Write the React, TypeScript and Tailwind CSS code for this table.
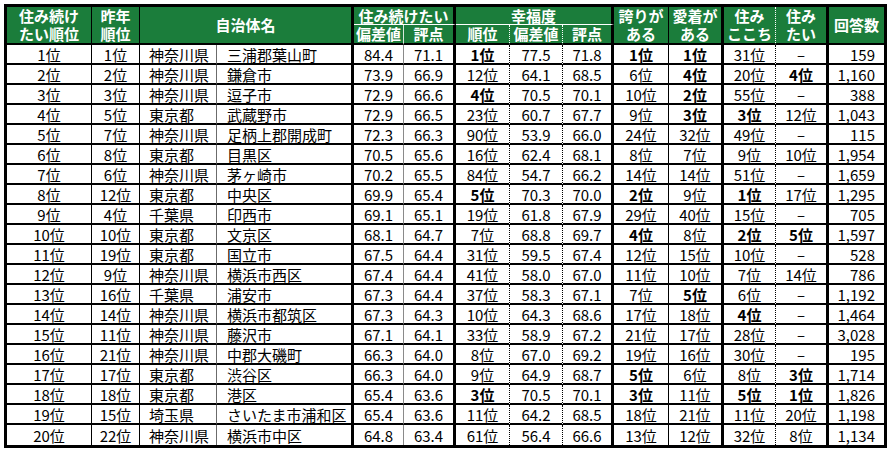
import React from "react";

type Row = string[];

const D = "–";

const rows: Row[] = [
  ["1位", "1位", "神奈川県", "三浦郡葉山町", "84.4", "71.1", "*1位", "77.5", "71.8", "*1位", "*1位", "31位", D, "159"],
  ["2位", "2位", "神奈川県", "鎌倉市", "73.9", "66.9", "12位", "64.1", "68.5", "6位", "*4位", "20位", "*4位", "1,160"],
  ["3位", "3位", "神奈川県", "逗子市", "72.9", "66.6", "*4位", "70.5", "70.1", "10位", "*2位", "55位", D, "388"],
  ["4位", "5位", "東京都", "武蔵野市", "72.9", "66.5", "23位", "60.7", "67.7", "9位", "*3位", "*3位", "12位", "1,043"],
  ["5位", "7位", "神奈川県", "足柄上郡開成町", "72.3", "66.3", "90位", "53.9", "66.0", "24位", "32位", "49位", D, "115"],
  ["6位", "8位", "東京都", "目黒区", "70.5", "65.6", "16位", "62.4", "68.1", "8位", "7位", "9位", "10位", "1,954"],
  ["7位", "6位", "神奈川県", "茅ヶ崎市", "70.2", "65.5", "84位", "54.7", "66.2", "14位", "14位", "51位", D, "1,659"],
  ["8位", "12位", "東京都", "中央区", "69.9", "65.4", "*5位", "70.3", "70.0", "*2位", "9位", "*1位", "17位", "1,295"],
  ["9位", "4位", "千葉県", "印西市", "69.1", "65.1", "19位", "61.8", "67.9", "29位", "40位", "15位", D, "705"],
  ["10位", "10位", "東京都", "文京区", "68.1", "64.7", "7位", "68.8", "69.7", "*4位", "8位", "*2位", "*5位", "1,597"],
  ["11位", "19位", "東京都", "国立市", "67.5", "64.4", "31位", "59.5", "67.4", "12位", "15位", "10位", D, "528"],
  ["12位", "9位", "神奈川県", "横浜市西区", "67.4", "64.4", "41位", "58.0", "67.0", "11位", "10位", "7位", "14位", "786"],
  ["13位", "16位", "千葉県", "浦安市", "67.3", "64.4", "37位", "58.3", "67.1", "7位", "*5位", "6位", D, "1,192"],
  ["14位", "14位", "神奈川県", "横浜市都筑区", "67.3", "64.3", "10位", "64.3", "68.6", "17位", "18位", "*4位", D, "1,464"],
  ["15位", "11位", "神奈川県", "藤沢市", "67.1", "64.1", "33位", "58.9", "67.2", "21位", "17位", "28位", D, "3,028"],
  ["16位", "21位", "神奈川県", "中郡大磯町", "66.3", "64.0", "8位", "67.0", "69.2", "19位", "16位", "30位", D, "195"],
  ["17位", "17位", "東京都", "渋谷区", "66.3", "64.0", "9位", "64.9", "68.7", "*5位", "6位", "8位", "*3位", "1,714"],
  ["18位", "18位", "東京都", "港区", "65.4", "63.6", "*3位", "70.5", "70.1", "*3位", "11位", "*5位", "*1位", "1,826"],
  ["19位", "15位", "埼玉県", "さいたま市浦和区", "65.4", "63.6", "11位", "64.2", "68.5", "18位", "21位", "11位", "20位", "1,198"],
  ["20位", "22位", "神奈川県", "横浜市中区", "64.8", "63.4", "61位", "56.4", "66.6", "13位", "12位", "32位", "8位", "1,134"],
];

const colBorder: string[] = [
  "border-r border-r-black",
  "border-r border-r-black",
  "border-r border-r-[#6b6b6b]",
  "border-r-[3px] border-r-black",
  "border-r border-r-[#8a8a8a]",
  "border-r-[3px] border-r-black",
  "border-r border-r-black [border-right-style:dotted]",
  "border-r border-r-black [border-right-style:dotted]",
  "border-r-[3px] border-r-black",
  "border-r border-r-black",
  "border-r-[3px] border-r-black",
  "border-r border-r-black [border-right-style:dotted]",
  "border-r-[3px] border-r-black",
  "",
];

const colAlign: string[] = [
  "justify-center",
  "justify-center",
  "justify-start pl-[9px]",
  "justify-start pl-[10px]",
  "justify-center",
  "justify-center",
  "justify-center",
  "justify-center",
  "justify-center",
  "justify-center",
  "justify-center",
  "justify-center",
  "justify-center",
  "justify-end pr-[9px]",
];

const hdr = "flex items-center justify-center text-center bg-[#1b7d3b] text-white font-bold leading-[18px] text-[15px]";

export default function App() {
  return (
    <div className="w-[892px] h-[454px] bg-white pt-[4px] pl-[4px]" style={{ fontFamily: '"Noto Sans CJK JP", "Noto Sans", sans-serif' }}>
      <div className="grid w-[883px] border-[3px] border-black grid-cols-[85px_48px_77px_137px_50px_52px_54px_53px_51px_55px_55px_52px_53px_55px] grid-rows-[18px_20px_repeat(20,20px)] text-[15px] text-black">
        {/* header */}
        <div className={`${hdr} row-span-2 border-r border-r-black border-b-2 border-b-black`}>
          <span>住み続け<br />たい順位</span>
        </div>
        <div className={`${hdr} row-span-2 border-r border-r-black border-b-2 border-b-black`}>
          <span>昨年<br />順位</span>
        </div>
        <div className={`${hdr} col-span-2 row-span-2 border-r-[3px] border-r-black border-b-2 border-b-black`}>
          自治体名
        </div>
        <div className={`${hdr} col-span-2 border-r-[3px] border-r-black border-b border-b-white`}>
          住み続けたい
        </div>
        <div className={`${hdr} col-span-3 border-r-[3px] border-r-black border-b border-b-white`}>
          幸福度
        </div>
        <div className={`${hdr} row-span-2 border-r border-r-black border-b-2 border-b-black`}>
          <span>誇りが<br />ある</span>
        </div>
        <div className={`${hdr} row-span-2 border-r-[3px] border-r-black border-b-2 border-b-black`}>
          <span>愛着が<br />ある</span>
        </div>
        <div className={`${hdr} row-span-2 border-r border-r-white [border-right-style:dotted] border-b-2 border-b-black`}>
          <span>住み<br />ここち</span>
        </div>
        <div className={`${hdr} row-span-2 border-r-[3px] border-r-black border-b-2 border-b-black`}>
          <span>住み<br />たい</span>
        </div>
        <div className={`${hdr} row-span-2 border-b-2 border-b-black`}>回答数</div>

        <div className={`${hdr} border-r border-r-[#d8e8dc] border-b-2 border-b-black`}>偏差値</div>
        <div className={`${hdr} border-r-[3px] border-r-black border-b-2 border-b-black`}>評点</div>
        <div className={`${hdr} border-r border-r-white [border-right-style:dotted] border-b-2 border-b-black`}>順位</div>
        <div className={`${hdr} border-r border-r-white [border-right-style:dotted] border-b-2 border-b-black`}>偏差値</div>
        <div className={`${hdr} border-r-[3px] border-r-black border-b-2 border-b-black`}>評点</div>

        {/* data */}
        {rows.map((row, ri) =>
          row.map((cell, ci) => {
            const bold = cell.startsWith("*");
            const text = bold ? cell.slice(1) : cell;
            const last = ri === rows.length - 1;
            return (
              <div
                key={`${ri}-${ci}`}
                className={`flex items-center whitespace-nowrap leading-none ${colAlign[ci]} ${colBorder[ci]} ${
                  last ? "" : "border-b-2 border-b-black"
                } ${bold ? "font-bold" : "font-normal"}`}
              >
                {text}
              </div>
            );
          })
        )}
      </div>
    </div>
  );
}
